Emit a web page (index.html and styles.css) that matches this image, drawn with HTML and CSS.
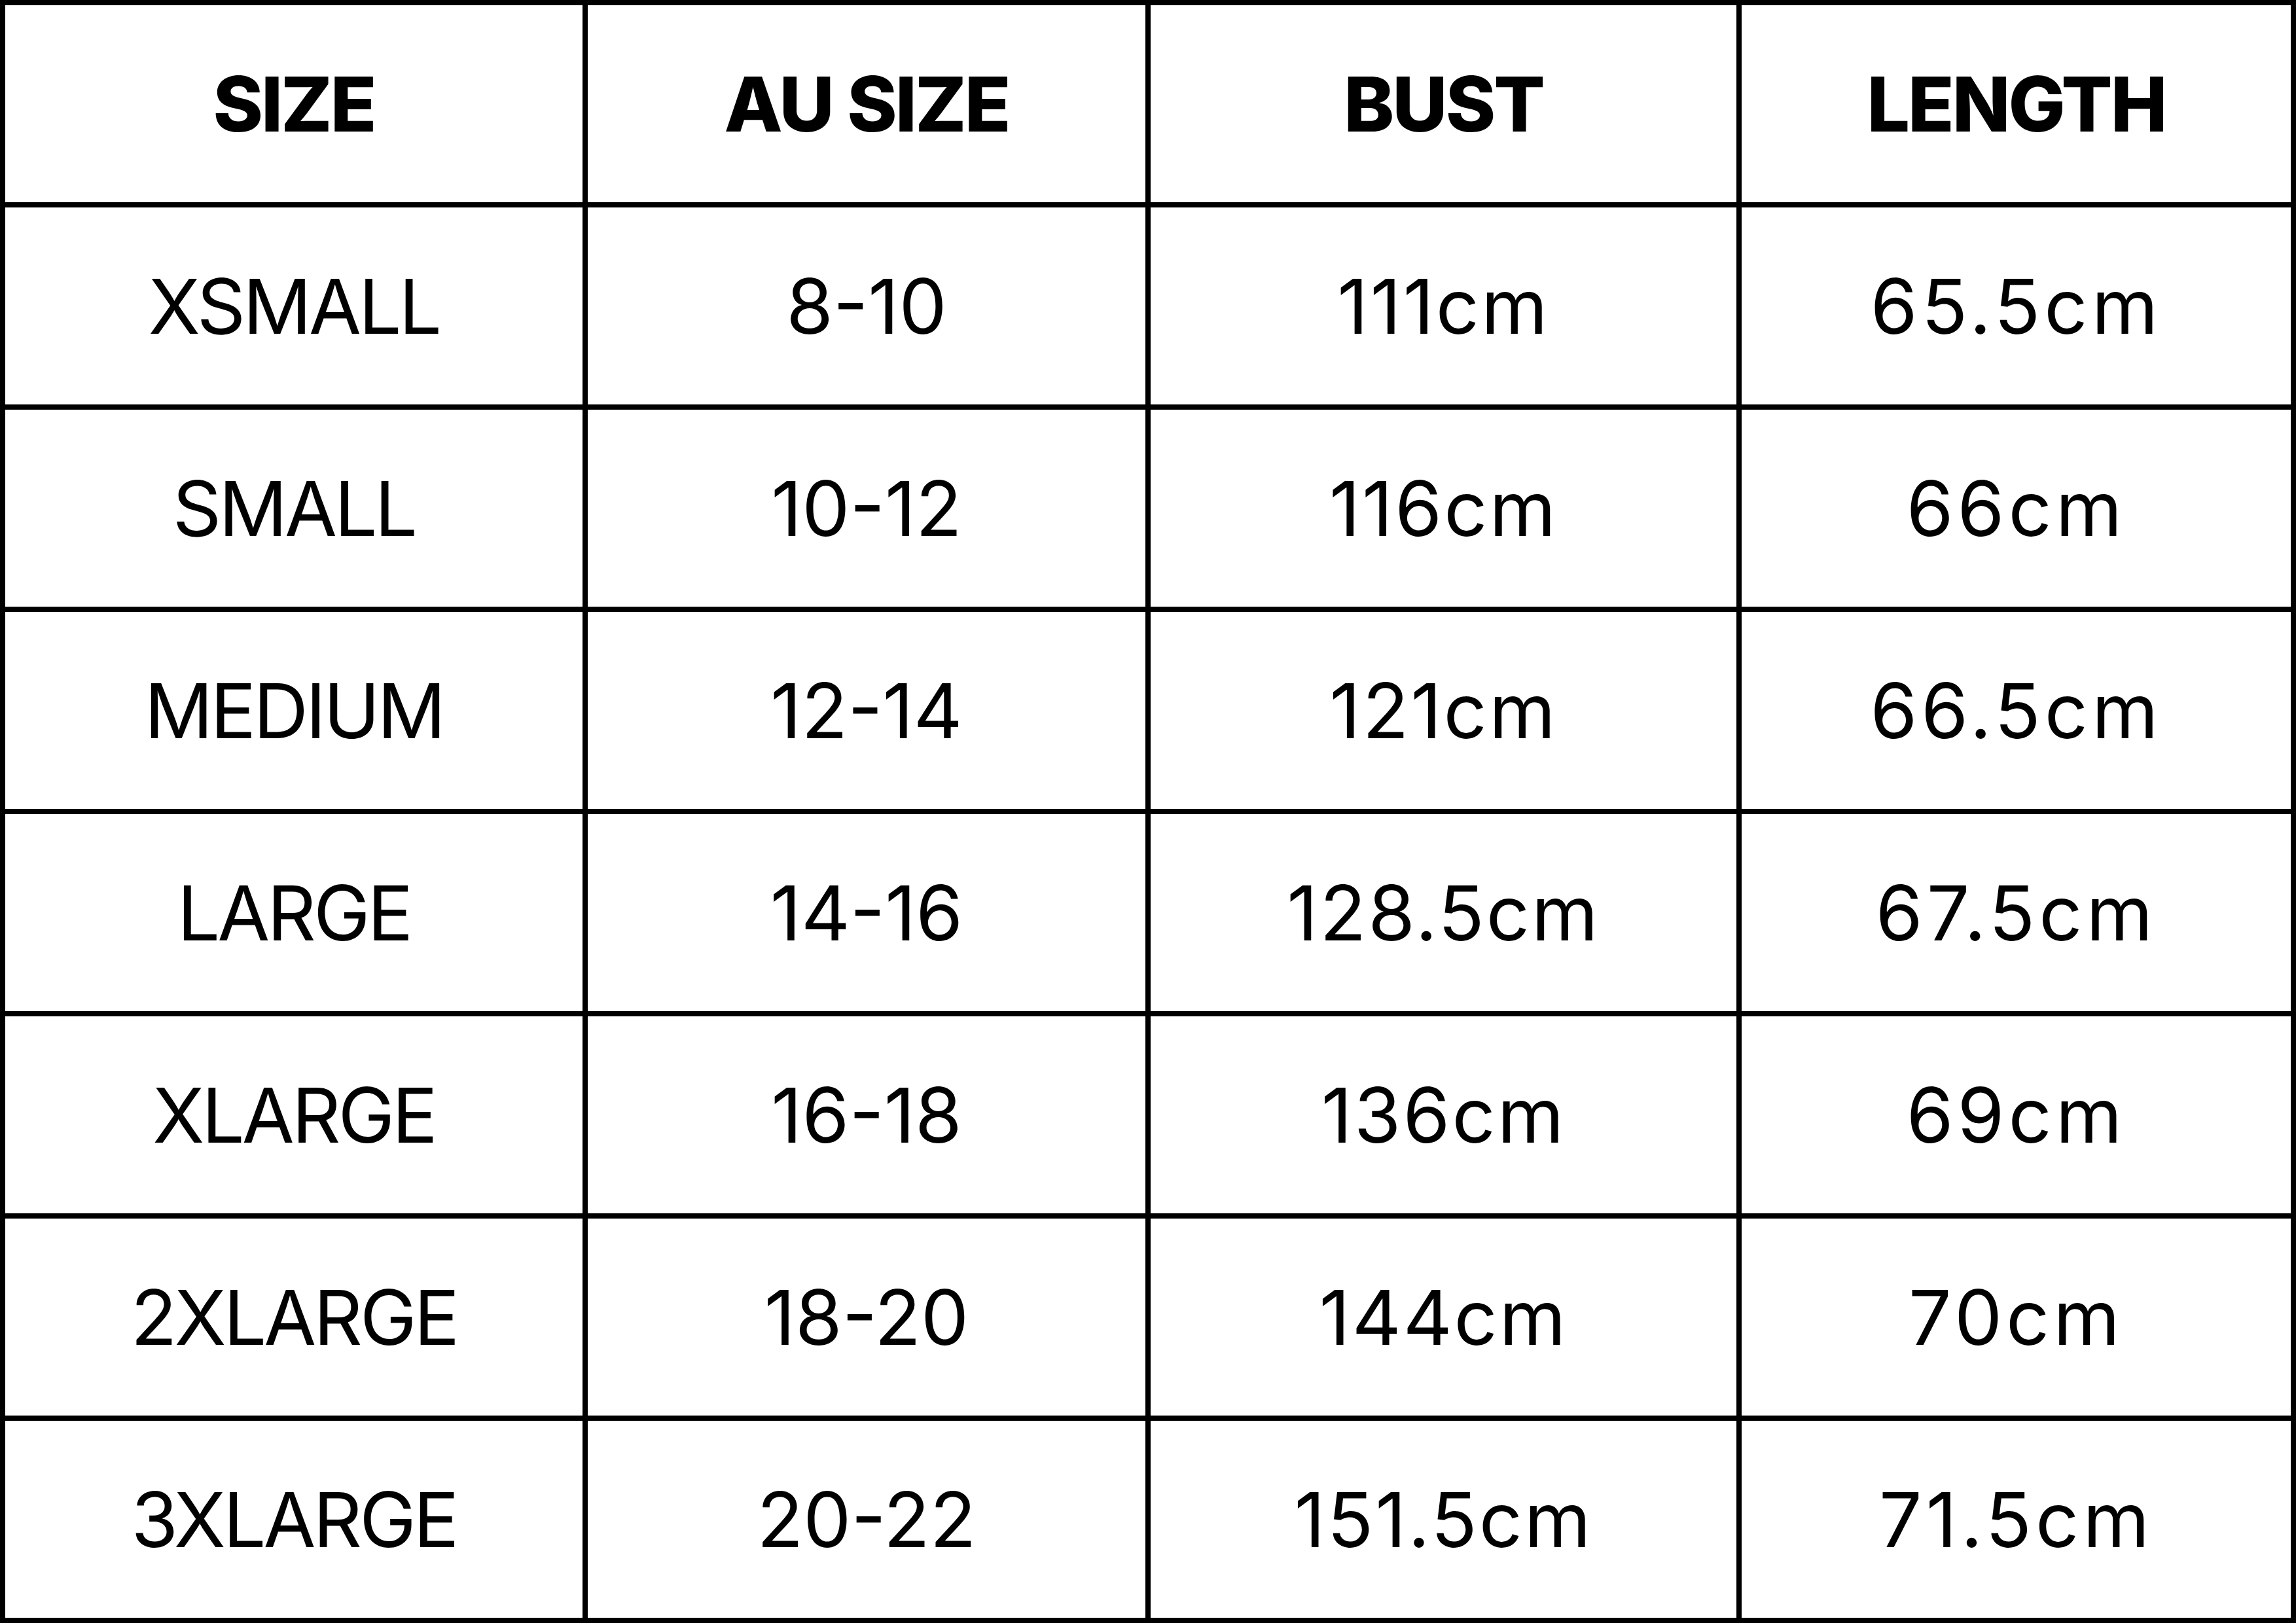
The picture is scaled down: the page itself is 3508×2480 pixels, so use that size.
FILE: index.html
```html
<!DOCTYPE html>
<html lang="en">
<head>
<meta charset="utf-8">
<title>Size Chart</title>
<link rel="stylesheet" href="styles.css">
</head>
<body>
<div class="chart">
  <div class="cell head">SIZE</div>
  <div class="cell head">AU SIZE</div>
  <div class="cell head">BUST</div>
  <div class="cell head">LENGTH</div>

  <div class="cell name">XSMALL</div>
  <div class="cell au">8-10</div>
  <div class="cell bust">111cm</div>
  <div class="cell length">65.5cm</div>

  <div class="cell name">SMALL</div>
  <div class="cell au">10-12</div>
  <div class="cell bust">116cm</div>
  <div class="cell length">66cm</div>

  <div class="cell name">MEDIUM</div>
  <div class="cell au">12-14</div>
  <div class="cell bust">121cm</div>
  <div class="cell length">66.5cm</div>

  <div class="cell name">LARGE</div>
  <div class="cell au">14-16</div>
  <div class="cell bust">128.5cm</div>
  <div class="cell length">67.5cm</div>

  <div class="cell name">XLARGE</div>
  <div class="cell au">16-18</div>
  <div class="cell bust">136cm</div>
  <div class="cell length">69cm</div>

  <div class="cell name">2XLARGE</div>
  <div class="cell au">18-20</div>
  <div class="cell bust">144cm</div>
  <div class="cell length">70cm</div>

  <div class="cell name">3XLARGE</div>
  <div class="cell au">20-22</div>
  <div class="cell bust">151.5cm</div>
  <div class="cell length">71.5cm</div>
</div>
</body>
</html>
```
FILE: styles.css
```css
html, body {
  margin: 0;
  padding: 0;
  background: #ffffff;
}

.chart {
  display: grid;
  grid-template-columns: 882px 852px 895px 839px;
  grid-auto-rows: 301px;
  gap: 8px;
  padding: 8px;
  width: 3508px;
  height: 2480px;
  box-sizing: border-box;
  background: #000000;
  font-family: Inter, "Liberation Sans", sans-serif;
  color: #000000;
}

.cell {
  background: #ffffff;
  display: flex;
  align-items: center;
  justify-content: center;
  font-size: 116px;
  font-weight: 400;
  white-space: nowrap;
}

.head {
  font-weight: 800;
  letter-spacing: -3px;
}

.name {
  letter-spacing: -4px;
}

.bust {
  letter-spacing: 3px;
}

.length {
  letter-spacing: 6px;
}
```
